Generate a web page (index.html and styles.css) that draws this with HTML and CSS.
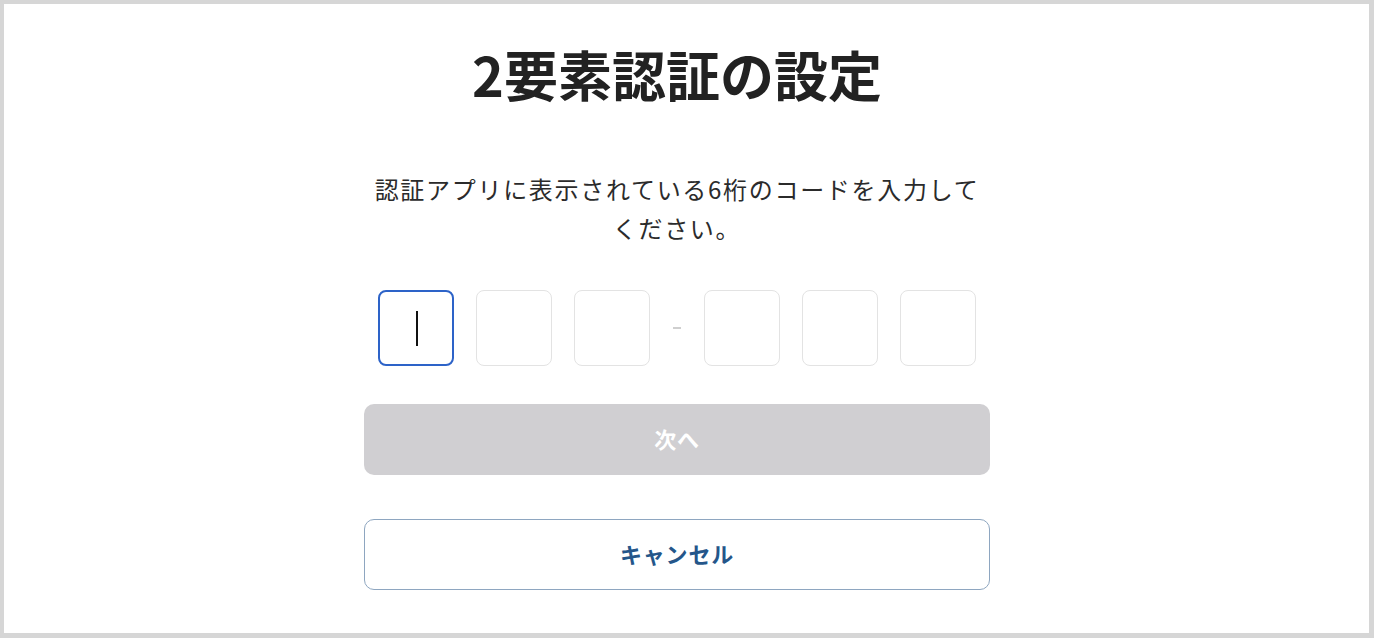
FILE: index.html
```html
<!DOCTYPE html>
<html lang="ja">
<head>
<meta charset="utf-8">
<title>2要素認証の設定</title>
<link rel="stylesheet" href="styles.css">
</head>
<body>
<div class="frame">
  <main class="main">
    <h1 class="title">2要素認証の設定</h1>
    <p class="lead">認証アプリに表示されている6桁のコードを入力して<br>ください。</p>
    <div class="code">
      <div class="group">
        <div class="cell cell-active"><span class="caret"></span></div>
        <div class="cell"></div>
        <div class="cell"></div>
      </div>
      <div class="sep"><span class="dash"></span></div>
      <div class="group">
        <div class="cell"></div>
        <div class="cell"></div>
        <div class="cell"></div>
      </div>
    </div>
    <button class="btn btn-next" type="button">次へ</button>
    <button class="btn btn-cancel" type="button">キャンセル</button>
  </main>
</div>
</body>
</html>
```

FILE: styles.css
```css
html, body {
  margin: 0;
  padding: 0;
  background: #d6d6d6;
}
body {
  font-family: "Noto Sans CJK JP", "Noto Sans", sans-serif;
}
.frame {
  box-sizing: border-box;
  width: 1374px;
  height: 638px;
  border-style: solid;
  border-color: #d6d6d6;
  border-width: 4px 5px 5px 4px;
  background: #ffffff;
}
.main {
  display: flex;
  flex-direction: column;
  align-items: center;
  padding-top: 30px;
  padding-right: 19px;
}
.title {
  margin: 0;
  font-size: 54px;
  line-height: 80px;
  font-weight: 700;
  color: #222222;
  letter-spacing: 0;
}
.lead {
  margin: 57px 0 0;
  font-size: 24px;
  line-height: 39px;
  letter-spacing: 1.7px;
  color: #2b2b2b;
  text-align: center;
  position: relative;
  top: -2px;
}
.code {
  margin-top: 41px;
  display: flex;
  align-items: center;
}
.group {
  display: flex;
  gap: 22px;
}
.cell {
  box-sizing: border-box;
  width: 76px;
  height: 76px;
  border: 1px solid #e3e3e3;
  border-radius: 8px;
  display: flex;
  align-items: center;
  justify-content: center;
}
.cell-active {
  border: 2px solid #2d63c8;
}
.caret {
  width: 2px;
  height: 35px;
  margin-left: 2px;
  background: #111111;
}
.sep {
  width: 54px;
  display: flex;
  justify-content: center;
}
.dash {
  width: 8px;
  height: 2px;
  background: #cfcfcf;
}
.btn {
  box-sizing: border-box;
  width: 626px;
  height: 71px;
  padding: 0 0 4px;
  border-radius: 10px;
  font-family: "Noto Sans CJK JP", "Noto Sans", sans-serif;
  font-size: 22px;
  font-weight: 700;
  letter-spacing: 0.8px;
}
.btn-next {
  margin-top: 38px;
  border: none;
  background: #d0cfd2;
  color: #ffffff;
}
.btn-cancel {
  margin-top: 44px;
  border: 1px solid #8ea6c0;
  background: #ffffff;
  color: #24568a;
}
```
